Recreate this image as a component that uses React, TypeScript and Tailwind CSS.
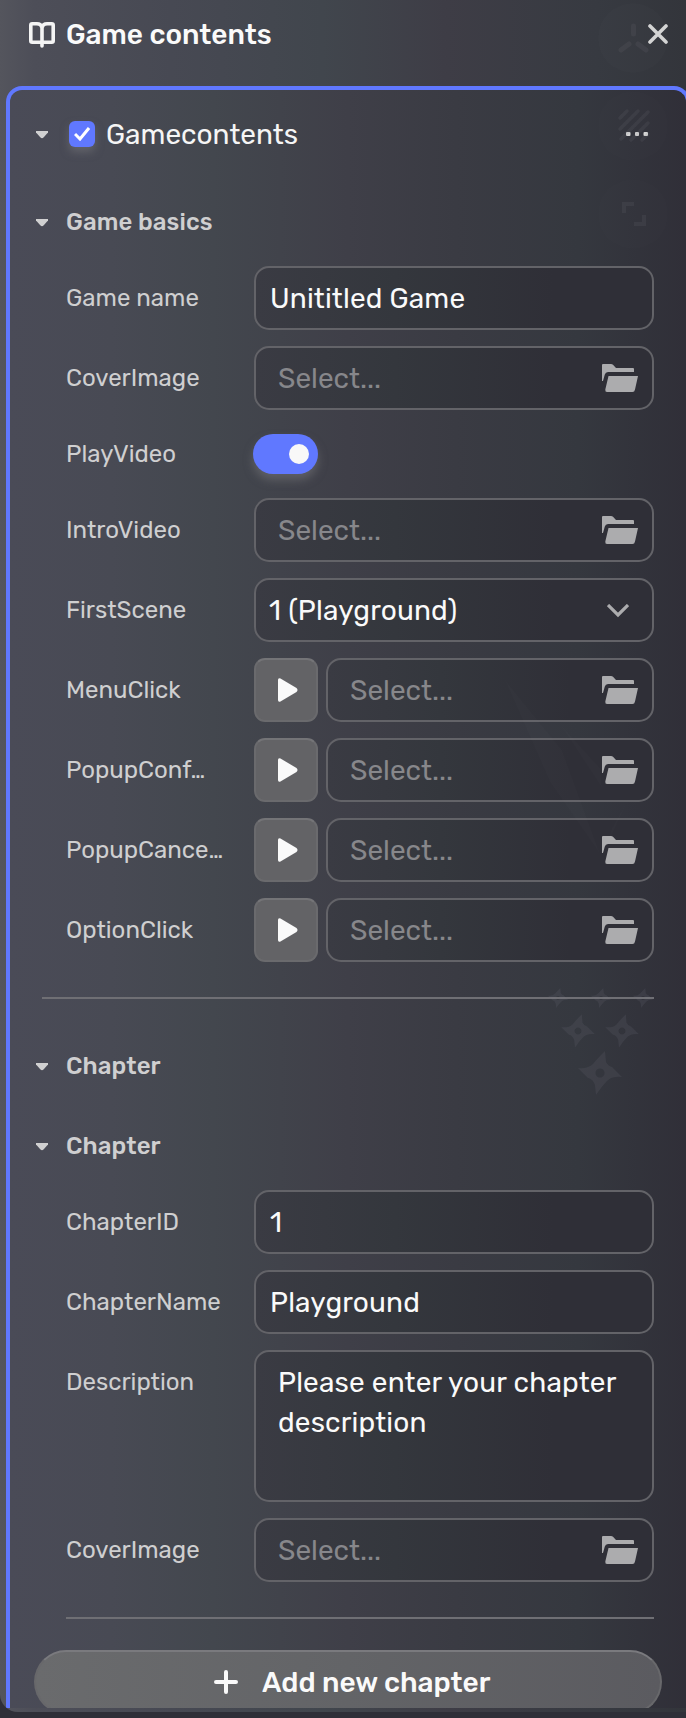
import React from "react";

function Caret() {
  return (
    <svg width="12" height="8" viewBox="0 0 12 8" className="mt-px shrink-0" fill="#d0d0d1">
      <path d="M0 0h12v1.500L7.500 6.500Q6 8 4.500 6.500L0 1.500z" />
    </svg>
  );
}

function FolderIcon() {
  return (
    <svg width="36" height="28" viewBox="0 0 36 28" className="shrink-0" fill="#acacae">
      <path d="M0 17V1Q0 0 1 0h8q1.200 0 2 .8L14 4h17q1 0 1 1v3H6Q3.500 8 2.800 10.500L1 17z" />
      <path d="M6.500 12H36l-3 13.500Q32.500 28 30.500 28H5Q3 28 3.300 25.500z" />
    </svg>
  );
}

function BookIcon() {
  return (
    <svg width="26" height="26" viewBox="0 0 26 26" className="shrink-0" fill="none" stroke="#f4f4f4" strokeWidth="3.600" strokeLinecap="round" strokeLinejoin="round">
      <path d="M13 5.500V24M13 5.500Q12 1.800 8 1.800H3.200Q1.800 1.800 1.800 3.200V18.800Q1.800 20.200 3.200 20.200H13M13 5.500Q14 1.800 18 1.800h4.800q1.400 0 1.400 1.400v15.600q0 1.400-1.400 1.400H13" />
    </svg>
  );
}

const shuriken = "M5-22L6-11Q8-7 12-6L22 4Q12 3 7 8Q2 13-4 22L-5 12Q-7 6-12 5L-22-5Q-12-4-7-9Q-3-14 5-22zM0-4.500a4.500 4.500 0 1 0 .01 0z";

function Backdrop() {
  return (
    <svg width="686" height="1718" viewBox="0 0 686 1718" className="pointer-events-none absolute left-0 top-0" fill="none">
      <g fill="#fff" fillOpacity=".007">
        <circle cx="633" cy="38" r="35" fillOpacity=".012" />
        <circle cx="633" cy="126" r="35" />
        <circle cx="633" cy="214" r="35" />
      </g>
      <g stroke="#777783" strokeOpacity=".14" strokeWidth="5" strokeLinecap="round">
        <path d="M633.500 26v8M629 44l-8 6M638 44l8 6" />
        <path d="M620 118l7-7M620 129l18-18M621 139l27-27M631 140l17-17M642 140l6-6" strokeWidth="3.500" />
        <path d="M624 213v-9h10M644 215v9h-10" strokeWidth="4" strokeLinecap="butt" />
      </g>
      <path d="M505 680L550 782L600 854L562 750zM560 724L602 788L600 768zM604 852L628 800L612 828z" fill="#fff" fillOpacity=".01" />
      <g fill="#777783" fillOpacity=".15" fillRule="evenodd">
        <path d={shuriken} transform="translate(558 998) scale(.46)" />
        <path d={shuriken} transform="translate(601 998) scale(.46)" />
        <path d={shuriken} transform="translate(643 998) scale(.46)" />
        <path d={shuriken} transform="translate(578 1031) scale(.76)" />
        <path d={shuriken} transform="translate(622 1031) scale(.76)" />
        <path d={shuriken} transform="translate(600 1073)" />
      </g>
    </svg>
  );
}

function Field({ label, height = "h-16", children }: { label: string; height?: string; children: React.ReactNode }) {
  return (
    <div className={`flex ${height}`}>
      <div className={`w-[188px] shrink-0 ${height === "h-14" ? "leading-[56px]" : "pt-px leading-[62px]"} whitespace-nowrap text-[24px] text-[#cfcfd0]`}>{label}</div>
      {children}
    </div>
  );
}

const box = "flex min-w-0 flex-1 rounded-[15px] border-2 border-[#636368] bg-[linear-gradient(90deg,#3a3b43,#34373d_35%,#2f2f37_75%)]";

function TextBox({ value }: { value: string }) {
  return <div className={`${box} items-center pl-[14px] pt-[2px] text-[28px] tracking-[0.15px] text-[#fafafa]`}>{value}</div>;
}

function SelectBox() {
  return (
    <div className={`${box} items-center justify-between pl-[22px] pr-[14px] text-[28px] text-[#87878b]`}>
      <span className="pt-[2px]">Select...</span>
      <FolderIcon />
    </div>
  );
}

function SoundPicker() {
  return (
    <div className="flex flex-1 gap-2">
      <div className="flex w-16 items-center justify-center rounded-[11px] border-2 border-[#6a6a6d] border-t-[#747477] bg-[#636366] pl-[4px]">
        <svg width="20" height="24" viewBox="0 0 20 24" fill="#fafafa">
          <path d="M0 2Q0-.5 2.500.5L18.500 10q2 2 0 4L2.500 23.500Q0 24.500 0 22z" />
        </svg>
      </div>
      <SelectBox />
    </div>
  );
}

function SectionTitle({ title, height }: { title: string; height: string }) {
  return (
    <div className={`flex ${height} items-center pl-[26px] text-[24px] font-medium text-[#cfcfd0]`}>
      <Caret />
      <span className="ml-[18px] tracking-[0.1px]">{title}</span>
    </div>
  );
}

export default function App() {
  return (
    <div className="relative h-[1718px] w-[686px] overflow-hidden bg-[#2f2f38] font-['Rubik','Roboto',sans-serif]">
      <div className="h-[1712px] overflow-hidden rounded-bl-[18px] bg-[linear-gradient(90deg,#54555d,#4d4e58_5%,#474953_25%,#41464d_47%,#3e3d46_65%,#373a41_87%,#33353b)]">
        <header className="flex h-[86px] items-start justify-between pl-[29px] pr-[18px] pt-[14px]">
          <div className="flex h-[42px] items-center">
            <BookIcon />
            <h1 className="ml-[11px] text-[28px] font-medium text-[#fafafa]">Game contents</h1>
          </div>
          <svg width="20" height="20" viewBox="0 0 20 20" className="mt-[10px]" stroke="#d4d4d4" strokeWidth="3.600" strokeLinecap="round">
            <path d="M2 2l16 16M18 2L2 18" />
          </svg>
        </header>

        <main className="ml-[6px] h-[1622px] w-[684px] overflow-hidden rounded-t-[16px] border-4 border-b-0 border-[#6078ff] bg-[linear-gradient(90deg,#4a4b57,#484a54_15%,#43474e_30%,#3f3f48_50%,#3a3b43_66%,#35383f_84%,#302f38)]">
          <div className="flex h-[88px] items-center pl-[26px] pr-[38px]">
            <Caret />
            <div className="ml-[21px] flex size-[26px] items-center justify-center rounded-[6px] bg-[#6078ff] shadow-[0_5px_8px_#7c7c8080]">
              <svg width="16" height="14" viewBox="0 0 16 14" fill="none" stroke="#fff" strokeWidth="3">
                <path d="M1 7l5 5L15 1" />
              </svg>
            </div>
            <span className="ml-[11px] pt-[2px] text-[28px] text-[#f5f5f5]">Gamecontents</span>
            <svg width="22" height="4" viewBox="0 0 22 4" className="ml-auto" fill="#d6d6d6">
              <rect width="4.500" height="4" rx="1" />
              <rect x="9" width="4" height="4" rx="1" />
              <rect x="17.500" width="4.500" height="4" rx="1" />
            </svg>
          </div>

          <SectionTitle title="Game basics" height="h-[88px]" />
          <div className="flex w-[644px] flex-col gap-4 pl-[56px]">
            <Field label="Game name"><TextBox value="Unititled Game" /></Field>
            <Field label="CoverImage"><SelectBox /></Field>
            <Field label="PlayVideo" height="h-14">
              <div className="-ml-px mt-2 flex h-[40px] w-[65px] items-center justify-end rounded-full bg-[#6078ff] pr-[9px] shadow-[0_6px_10px_#7c7c8080]">
                <div className="size-5 rounded-full bg-[#f8f8f8]" />
              </div>
            </Field>
            <Field label="IntroVideo"><SelectBox /></Field>
            <Field label="FirstScene">
              <div className={`${box} items-center justify-between pl-[13px] pr-[23px] text-[28px] tracking-[0.15px] text-[#fafafa]`}>
                <span className="pt-[2px]">1 (Playground)</span>
                <svg width="22" height="14" viewBox="0 0 22 14" className="mt-px" fill="none" stroke="#acacae" strokeWidth="3.200">
                  <path d="M1 1l10 10L21 1" />
                </svg>
              </div>
            </Field>
            <Field label="MenuClick"><SoundPicker /></Field>
            <Field label="PopupConf…"><SoundPicker /></Field>
            <Field label="PopupCance…"><SoundPicker /></Field>
            <Field label="OptionClick"><SoundPicker /></Field>
          </div>
          <div className="ml-8 mt-[35px] h-[2px] w-[612px] bg-[#6f6f74]" />

          <div className="mt-[27px]">
            <SectionTitle title="Chapter" height="h-20" />
            <SectionTitle title="Chapter" height="h-20" />
          </div>
          <div className="mt-1 flex w-[644px] flex-col gap-4 pl-[56px]">
            <Field label="ChapterID"><TextBox value="1" /></Field>
            <Field label="ChapterName"><TextBox value="Playground" /></Field>
            <Field label="Description" height="h-[152px]">
              <div className={`${box} pl-[22px] pt-[11px] text-[28px] leading-[40px] tracking-[0.16px] text-[#fafafa]`}>
                Please enter your chapter
                <br />
                description
              </div>
            </Field>
            <Field label="CoverImage"><SelectBox /></Field>
          </div>
          <div className="ml-[56px] mt-[35px] h-[2px] w-[588px] bg-[#6f6f74]" />

          <div className="ml-6 mt-[31px] flex h-16 w-[628px] items-center rounded-full border-2 border-[#68686b] border-t-[#7a7a7e] bg-[linear-gradient(90deg,#6a6b6d,#636467_50%,#5b5b60)] pl-[178px]">
            <svg width="24" height="24" viewBox="0 0 24 24" stroke="#fafafa" strokeWidth="4" strokeLinecap="round">
              <path d="M12 2v20M2 12h20" />
            </svg>
            <span className="ml-6 pt-[2px] text-[28px] font-medium text-[#fafafa]">Add new chapter</span>
          </div>
        </main>
      </div>
      <Backdrop />
    </div>
  );
}
